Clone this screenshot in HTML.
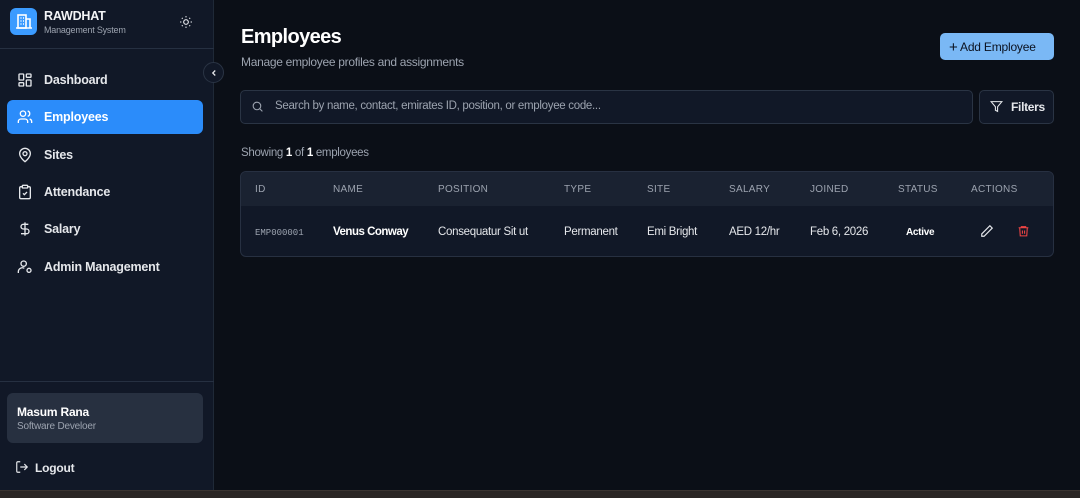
<!DOCTYPE html>
<html><head><meta charset="utf-8"><style>
*{box-sizing:border-box;margin:0;padding:0}
body{width:1080px;height:498px;overflow:hidden;background:#0b0f17;font-family:"Liberation Sans",sans-serif;color:#e5e7eb;position:relative;letter-spacing:-.2px}
.sb{position:absolute;left:0;top:0;width:214px;height:490px;background:#111827;border-right:1px solid #1f2937}
.logo{position:absolute;left:10px;top:8px;width:27px;height:27px;border-radius:6px;background:#3b9bff}
.brand{position:absolute;left:44px;top:9px;font-size:12.5px;font-weight:bold;color:#f3f4f6}
.sub{position:absolute;left:44px;top:25px;font-size:9px;color:#9ca3af}
.hr{position:absolute;left:0;width:214px;height:1px;background:#263041}
.nav{position:absolute;left:7px;width:196px;height:34px;border-radius:6px;font-size:12.5px;font-weight:bold;color:#e5e7eb;padding-left:37px;line-height:34px}
.nav svg{position:absolute;left:10px;top:9px}
.act{background:#2b8cfa;color:#fff}
.txt{position:absolute;white-space:nowrap}
.th{position:absolute;top:184px;font-size:10px;letter-spacing:.3px;color:#9ca3af}
.td{position:absolute;top:226px;font-size:11.5px;color:#e5e7eb;white-space:nowrap;letter-spacing:-.3px}
</style></head><body>
<div class="sb">
 <div class="logo"><svg width="27" height="27" viewBox="0 0 27 27" fill="none" stroke="#fff" stroke-width="1.6"><rect x="8" y="7" width="8" height="13"/><path d="M16 11h4v9M6 20h16M10.5 10h1M13 10h1M10.5 13h1M13 13h1M10.5 16h1M13 16h1"/></svg></div>
 <div class="brand">RAWDHAT</div><div class="sub">Management System</div>
 <svg style="position:absolute;left:179px;top:15px" width="14" height="14" viewBox="0 0 24 24" fill="none" stroke="#e5e7eb" stroke-width="2"><circle cx="12" cy="12" r="4"/><path d="M12 2v2M12 20v2M4.9 4.9l1.4 1.4M17.7 17.7l1.4 1.4M2 12h2M20 12h2M4.9 19.1l1.4-1.4M17.7 6.3l1.4-1.4"/></svg>
 <div class="hr" style="top:48px"></div>
 <div class="nav" style="top:63px"><svg width="16" height="16" viewBox="0 0 24 24" fill="none" stroke="#e5e7eb" stroke-width="2"><rect x="3" y="3" width="7" height="9" rx="1"/><rect x="14" y="3" width="7" height="5" rx="1"/><rect x="14" y="12" width="7" height="9" rx="1"/><rect x="3" y="16" width="7" height="5" rx="1"/></svg>Dashboard</div>
 <div class="nav act" style="top:100px"><svg width="16" height="16" viewBox="0 0 24 24" fill="none" stroke="#fff" stroke-width="2"><path d="M16 21v-2a4 4 0 0 0-4-4H6a4 4 0 0 0-4 4v2"/><circle cx="9" cy="7" r="4"/><path d="M22 21v-2a4 4 0 0 0-3-3.9M16 3.1a4 4 0 0 1 0 7.8"/></svg>Employees</div>
 <div class="nav" style="top:138px"><svg width="16" height="16" viewBox="0 0 24 24" fill="none" stroke="#e5e7eb" stroke-width="2"><path d="M20 10c0 6-8 12-8 12s-8-6-8-12a8 8 0 0 1 16 0z"/><circle cx="12" cy="10" r="3"/></svg>Sites</div>
 <div class="nav" style="top:175px"><svg width="16" height="16" viewBox="0 0 24 24" fill="none" stroke="#e5e7eb" stroke-width="2"><rect x="8" y="2" width="8" height="4" rx="1"/><path d="M16 4h2a2 2 0 0 1 2 2v14a2 2 0 0 1-2 2H6a2 2 0 0 1-2-2V6a2 2 0 0 1 2-2h2"/><path d="M9 14l2 2 4-4"/></svg>Attendance</div>
 <div class="nav" style="top:212px"><svg width="16" height="16" viewBox="0 0 24 24" fill="none" stroke="#e5e7eb" stroke-width="2"><path d="M12 2v20M17 5H9.5a3.5 3.5 0 0 0 0 7h5a3.5 3.5 0 0 1 0 7H6"/></svg>Salary</div>
 <div class="nav" style="top:250px"><svg width="16" height="16" viewBox="0 0 24 24" fill="none" stroke="#e5e7eb" stroke-width="2"><circle cx="10" cy="7" r="4"/><path d="M2 21v-2a6 6 0 0 1 9-5"/><circle cx="18" cy="17" r="3"/></svg>Admin Management</div>
 <div class="hr" style="top:381px"></div>
 <div style="position:absolute;left:7px;top:393px;width:196px;height:50px;border-radius:6px;background:#273040"></div>
 <div class="txt" style="left:17px;top:405px;font-size:12px;font-weight:bold;color:#fff">Masum Rana</div>
 <div class="txt" style="left:17px;top:421px;font-size:10px;color:#9ca3af">Software Develoer</div>
 <svg style="position:absolute;left:15px;top:460px" width="14" height="14" viewBox="0 0 24 24" fill="none" stroke="#e5e7eb" stroke-width="2"><path d="M9 21H5a2 2 0 0 1-2-2V5a2 2 0 0 1 2-2h4M16 17l5-5-5-5M21 12H9"/></svg>
 <div class="txt" style="left:35px;top:461px;font-size:12px;font-weight:bold">Logout</div>
</div>
<div style="position:absolute;left:203px;top:62px;width:21px;height:21px;border-radius:50%;background:#111827;border:1px solid #2a3444"><svg style="position:absolute;left:5px;top:5px" width="10" height="10" viewBox="0 0 24 24" fill="none" stroke="#e5e7eb" stroke-width="3"><path d="M15 18l-6-6 6-6"/></svg></div>
<div class="txt" style="left:241px;top:26px;font-size:20px;font-weight:bold;color:#fff;letter-spacing:-.6px">Employees</div>
<div class="txt" style="left:241px;top:55px;font-size:12px;color:#9ca3af;letter-spacing:-.3px">Manage employee profiles and assignments</div>
<div style="position:absolute;left:940px;top:33px;width:114px;height:27px;border-radius:5px;background:#7ab8f5;color:#0b1220;font-size:12px;line-height:27px;padding-left:9px;white-space:nowrap"><span style="font-size:15px;position:relative;top:1px">+</span> Add Employee</div>
<div style="position:absolute;left:240px;top:90px;width:733px;height:34px;border-radius:5px;background:#111827;border:1px solid #2a3444"></div>
<svg style="position:absolute;left:251px;top:100px" width="13" height="13" viewBox="0 0 24 24" fill="none" stroke="#9ca3af" stroke-width="2"><circle cx="11" cy="11" r="7"/><path d="M21 21l-5-5"/></svg>
<div class="txt" style="left:275px;top:100px;font-size:11.5px;color:#9ca3af;letter-spacing:-.3px">Search by name, contact, emirates ID, position, or employee code...</div>
<div style="position:absolute;left:979px;top:90px;width:75px;height:34px;border-radius:5px;background:#111827;border:1px solid #2a3444"></div>
<svg style="position:absolute;left:990px;top:100px" width="13" height="13" viewBox="0 0 24 24" fill="none" stroke="#e5e7eb" stroke-width="2"><path d="M22 3H2l8 9.5V19l4 2v-8.5z"/></svg>
<div class="txt" style="left:1011px;top:100px;font-size:12px;font-weight:bold;letter-spacing:-.3px">Filters</div>
<div class="txt" style="left:241px;top:147px;font-size:11.5px;color:#9ca3af;letter-spacing:-.3px">Showing <b style="color:#fff">1</b> of <b style="color:#fff">1</b> employees</div>
<div style="position:absolute;left:240px;top:171px;width:814px;height:86px;border-radius:6px;background:#111827;border:1px solid #273041;overflow:hidden"><div style="height:34px;background:#1a2231"></div></div>
<div class="th" style="left:255px">ID</div><div class="th" style="left:333px">NAME</div><div class="th" style="left:438px">POSITION</div><div class="th" style="left:564px">TYPE</div><div class="th" style="left:647px">SITE</div><div class="th" style="left:729px">SALARY</div><div class="th" style="left:810px">JOINED</div><div class="th" style="left:898px">STATUS</div><div class="th" style="left:971px">ACTIONS</div>
<div class="td" style="left:255px;top:228px;font-size:9px;font-family:'Liberation Mono',monospace;color:#9ca3af;letter-spacing:0">EMP000001</div>
<div class="td" style="left:333px;font-weight:bold;color:#fff;letter-spacing:-.5px">Venus Conway</div>
<div class="td" style="left:438px">Consequatur Sit ut</div>
<div class="td" style="left:564px">Permanent</div>
<div class="td" style="left:647px">Emi Bright</div>
<div class="td" style="left:729px">AED 12/hr</div>
<div class="td" style="left:810px">Feb 6, 2026</div>
<div class="td" style="left:906px;top:227px;font-size:10px;font-weight:bold;color:#fff">Active</div>
<svg style="position:absolute;left:980px;top:224px" width="14" height="14" viewBox="0 0 24 24" fill="none" stroke="#e5e7eb" stroke-width="2"><path d="M17 3l4 4L7 21H3v-4z"/></svg>
<svg style="position:absolute;left:1017px;top:224px" width="13" height="14" viewBox="0 0 24 24" fill="none" stroke="#ef4444" stroke-width="2"><path d="M3 6h18M8 6V4h8v2M5 6l1 15h12l1-15M10 11v6M14 11v6"/></svg>
<div style="position:absolute;left:0;top:490px;width:1080px;height:8px;background:#2a2624;border-top:1px solid #3a3430"></div>
</body></html>
